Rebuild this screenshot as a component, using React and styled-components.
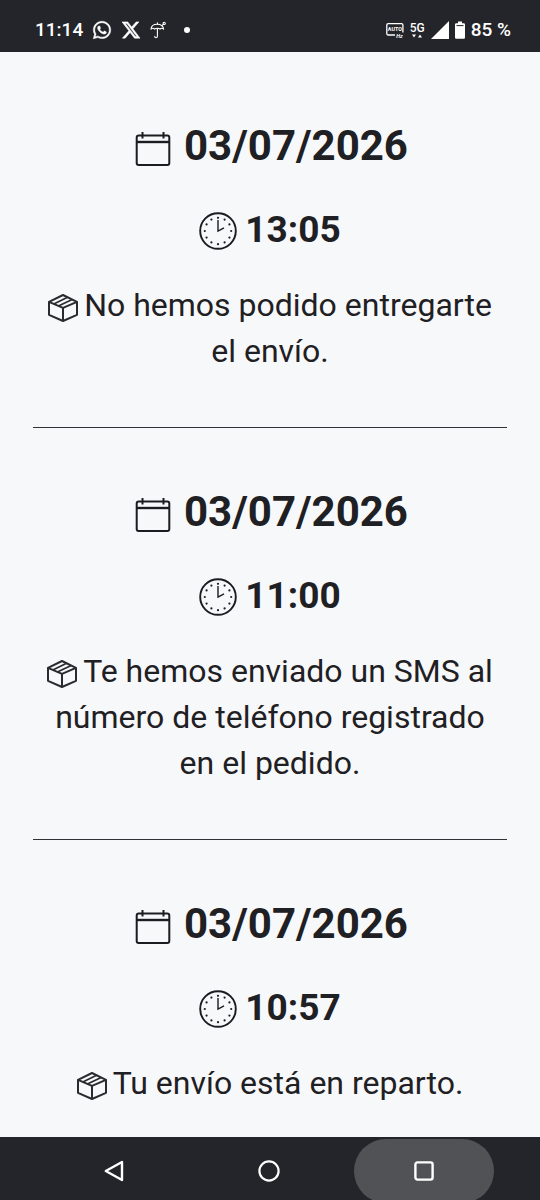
import React from "react";
import styled, { createGlobalStyle } from "styled-components";
import { FaWhatsapp, FaXTwitter } from "react-icons/fa6";

const GlobalStyle = createGlobalStyle`
  * { box-sizing: border-box; }
  body {
    margin: 0;
    background: #f7f8fa;
    color: #1f2023;
    font-family: Roboto, "Liberation Sans", sans-serif;
  }
`;

const Screen = styled.div`
  display: flex;
  flex-direction: column;
  height: 100vh;
`;

const StatusBar = styled.header`
  display: flex;
  flex: none;
  align-items: center;
  justify-content: space-between;
  height: 52px;
  padding: 8px 29px 0 35px;
  background: #24252a;
  color: #fff;
  font-size: 19px;
  line-height: 24px;
  font-weight: 500;
`;

const StatusGroup = styled.div`
  display: flex;
  align-items: center;
  gap: ${({ $gap }) => $gap}px;

  svg { display: block; flex: none; overflow: visible; }
`;

const Dot = styled.span`
  width: 6px;
  height: 6px;
  margin-left: 8px;
  border-radius: 50%;
  background: #fff;
`;

const Network = styled.span`
  display: flex;
  flex-direction: column;
  align-items: center;
  font-size: 12px;
  line-height: 12px;
`;

const History = styled.main`
  flex: 1;
  min-height: 0;
  padding: 10px 33px 0;
  overflow-y: auto;
  scrollbar-width: none;
`;

const Event = styled.article`
  padding: 53px 8px;
  border-bottom: 1px solid #303236;
  text-align: center;

  svg { overflow: visible; }
`;

const EventDate = styled.h2`
  margin: 0 0 26px;
  font-size: 42px;
  line-height: 62px;
  font-weight: 700;

  svg { margin: 0 14px 0 4px; vertical-align: -6px; }
`;

const EventTime = styled.h3`
  margin: 0 0 25px;
  font-size: 37px;
  line-height: 54px;
  font-weight: 700;

  svg { margin-right: 8px; vertical-align: -8px; }
`;

const EventText = styled.p`
  margin: 0;
  font-size: 32px;
  line-height: 46px;

  svg { margin-right: 6px; vertical-align: -6px; }
`;

const NavBar = styled.nav`
  display: flex;
  flex: none;
  justify-content: center;
  gap: 15px;
  height: 63px;
  padding: 2px 2px 0 0;
  overflow: hidden;
  background: #24252a;
`;

const NavButton = styled.button`
  display: flex;
  flex: none;
  align-items: center;
  justify-content: center;
  width: 140px;
  height: 64px;
  padding: 0;
  border: 0;
  border-radius: 32px;
  background: ${({ $pressed }) => ($pressed ? "#515256" : "transparent")};
  color: #fff;
`;

const CalendarIcon = () => (
  <svg width="34" height="34" viewBox="0 0 34 34" fill="none" stroke="#1b1c1f" strokeWidth="2" aria-hidden="true">
    <rect x="0.7" y="3.6" width="32.6" height="29.4" rx="2" />
    <path d="M1 10H33" strokeWidth="2.4" />
    <path d="M6.5 0V6.5M27.5 0V6.5" strokeWidth="2" />
  </svg>
);

const DOTS = Array.from({ length: 12 }, (_, i) => (i * Math.PI) / 6);

const ClockIcon = () => (
  <svg width="38" height="38" viewBox="0 0 38 38" fill="none" stroke="#1b1c1f" aria-hidden="true">
    <circle cx="19" cy="19" r="17.8" strokeWidth="1.9" />
    {DOTS.map((a) => (
      <circle key={a} cx={19 + 13.2 * Math.sin(a)} cy={19 - 13.2 * Math.cos(a)} r="1.1" fill="#1b1c1f" stroke="none" />
    ))}
    <path d="M19 8V19L25 15.8" strokeWidth="1.4" />
  </svg>
);

const BoxIcon = () => (
  <svg width="30" height="28" viewBox="0 0 30 28" fill="none" stroke="#2a2b2f" strokeWidth="2" strokeLinejoin="round" aria-hidden="true">
    <path d="M15 1L29 7.8V20.8L15 27L1 20.8V7.8ZM1 7.8L15 13.9L29 7.8M15 13.9V27" />
    <path d="M5.8 9.9L19.6 3.3M10.4 11.9L24.2 5.5" strokeWidth="1.7" />
  </svg>
);

const UmbrellaIcon = () => (
  <svg width="17" height="18" viewBox="0 0 17 18" fill="none" stroke="#fff" strokeWidth="1.1" strokeLinecap="round" strokeLinejoin="round" aria-hidden="true">
    <path d="M1 8.2C1.2 4.8 3.7 3.2 7.2 3.2S13.3 4.8 13.6 8.2C12.5 7 11 7 10 8.2C8.7 7 6 7 4.7 8.2C3.5 7 2.2 7 1 8.2Z" />
    <path d="M7.4 1.8V3M7.4 7.5V15.2C7.4 17.2 4.7 17.2 4.7 15.2" />
    <path d="M12 4.6L13.4 3.2" />
    <circle cx="14.2" cy="2.4" r="1.1" />
  </svg>
);

const AutoHzIcon = () => (
  <svg width="18" height="16" viewBox="0 0 18 16" fill="none" stroke="#fff" strokeWidth="1.3" aria-label="Auto Hz">
    <path d="M9 13H2.2Q.8 13 .8 11.6V3Q.8 1.6 2.2 1.6H15.5Q16.9 1.6 16.9 3V10.5" />
    <text x="8.9" y="9.4" textAnchor="middle" fontSize="5.4" fontWeight="700" fill="#fff" stroke="none">AUTO</text>
    <text x="13.4" y="15.6" textAnchor="middle" fontSize="5.4" fontWeight="700" fontStyle="italic" fill="#fff" stroke="none">Hz</text>
  </svg>
);

const ArrowsIcon = () => (
  <svg width="10" height="4" viewBox="0 0 10 4" fill="#fff" aria-hidden="true">
    <path d="M0 .5H4L2 3.5ZM6 3.5H10L8 .5Z" />
  </svg>
);

const SignalIcon = () => (
  <svg width="18" height="18" viewBox="0 0 18 18" fill="#fff" aria-hidden="true">
    <path d="M18 0V18H0Z" />
  </svg>
);

const BatteryIcon = () => (
  <svg width="10" height="18" viewBox="0 0 10 18" fill="#fff" aria-hidden="true">
    <path d="M3 .5H7V2.3H8.8Q10 2.3 10 3.5V16.5Q10 17.7 8.8 17.7H1.2Q0 17.7 0 16.5V3.5Q0 2.3 1.2 2.3H3Z" />
    <path d="M1.5 4.6H8.5" stroke="#24252a" strokeWidth="1" />
  </svg>
);

const EVENTS = [
  { date: "03/07/2026", time: "13:05", text: "No hemos podido entregarte el envío." },
  { date: "03/07/2026", time: "11:00", text: "Te hemos enviado un SMS al número de teléfono registrado en el pedido." },
  { date: "03/07/2026", time: "10:57", text: "Tu envío está en reparto." },
];

export default function App() {
  return (
    <Screen>
      <GlobalStyle />
      <StatusBar>
        <StatusGroup $gap={9}>
          <span>11:14</span>
          <FaWhatsapp size={20} strokeWidth={12} />
          <FaXTwitter size={20} strokeWidth={14} />
          <UmbrellaIcon />
          <Dot />
        </StatusGroup>
        <StatusGroup $gap={6}>
          <AutoHzIcon />
          <Network>
            5G
            <ArrowsIcon />
          </Network>
          <SignalIcon />
          <BatteryIcon />
          <span>85 %</span>
        </StatusGroup>
      </StatusBar>
      <History>
        {EVENTS.map((event) => (
          <Event key={event.time}>
            <EventDate><CalendarIcon />{event.date}</EventDate>
            <EventTime><ClockIcon />{event.time}</EventTime>
            <EventText><BoxIcon />{event.text}</EventText>
          </Event>
        ))}
      </History>
      <NavBar aria-label="Sistema">
        <NavButton type="button" aria-label="Atrás">
          <svg width="20" height="22" viewBox="0 0 20 22" fill="none" stroke="currentColor" strokeWidth="2.4" strokeLinejoin="round">
            <path d="M18 2V20L1.8 11Z" />
          </svg>
        </NavButton>
        <NavButton type="button" aria-label="Inicio">
          <svg width="22" height="22" viewBox="0 0 22 22" fill="none" stroke="currentColor" strokeWidth="2.2">
            <circle cx="11" cy="11" r="9.6" />
          </svg>
        </NavButton>
        <NavButton type="button" aria-label="Recientes" $pressed>
          <svg width="20" height="20" viewBox="0 0 20 20" fill="none" stroke="currentColor" strokeWidth="2.4">
            <rect x="1.4" y="1.4" width="17.2" height="17.2" rx="2" />
          </svg>
        </NavButton>
      </NavBar>
    </Screen>
  );
}
